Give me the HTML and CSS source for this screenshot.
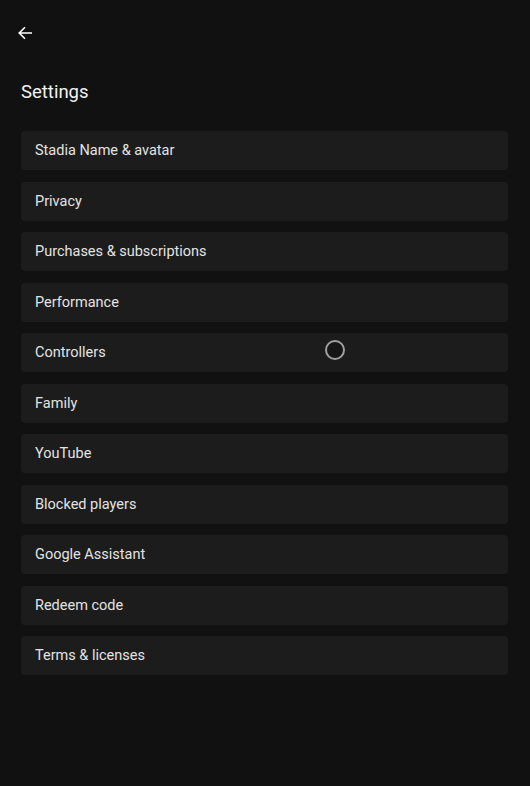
FILE: index.html
```html
<!DOCTYPE html>
<html>
<head>
<meta charset="utf-8">
<link rel="stylesheet" href="styles.css">
</head>
<body>
<div class="page">
  <header class="topbar">
    <button class="back" aria-label="Back">
      <svg width="16" height="16" viewBox="0 0 16 16"><path d="M15 8H2.5M8 2.2L2.2 8L8 13.8" fill="none" stroke="#fff" stroke-width="1.6"/></svg>
    </button>
  </header>
  <h1 class="title">Settings</h1>
  <ul class="list">
    <li class="item">Stadia Name &amp; avatar</li>
    <li class="item">Privacy</li>
    <li class="item">Purchases &amp; subscriptions</li>
    <li class="item">Performance</li>
    <li class="item">Controllers</li>
    <li class="item">Family</li>
    <li class="item">YouTube</li>
    <li class="item">Blocked players</li>
    <li class="item">Google Assistant</li>
    <li class="item">Redeem code</li>
    <li class="item">Terms &amp; licenses</li>
  </ul>
  <div class="spinner"></div>
</div>
</body>
</html>
```
FILE: styles.css
```css
html, body {
  margin: 0;
  padding: 0;
  background: #111111;
}
.page {
  position: relative;
  width: 530px;
  height: 786px;
  background: #111111;
  font-family: Roboto, "Open Sans", sans-serif;
  color: #e6e6e6;
}
.topbar {
  height: 67px;
  padding-left: 17px;
  display: flex;
  align-items: flex-start;
}
.back {
  margin-top: 25px;
  background: none;
  border: 0;
  padding: 0;
  width: 16px;
  height: 16px;
  display: flex;
}
.title {
  margin: 0 0 0 21px;
  height: 51px;
  line-height: 50px;
  font-size: 18.5px;
  font-weight: 400;
  color: #f2f2f2;
}
.list {
  list-style: none;
  margin: 13px 22px 0 21px;
  padding: 0;
  display: flex;
  flex-direction: column;
  gap: 11.5px;
}
.item {
  height: 39px;
  background: #1c1c1c;
  border-radius: 4px;
  padding-left: 14px;
  display: flex;
  align-items: center;
  font-size: 14.5px;
  color: #e3e3e3;
}
.spinner {
  position: absolute;
  left: 325px;
  top: 340px;
  width: 16px;
  height: 16px;
  border: 2px solid #a0a0a0;
  border-radius: 50%;
  background: #161616;
}
```
